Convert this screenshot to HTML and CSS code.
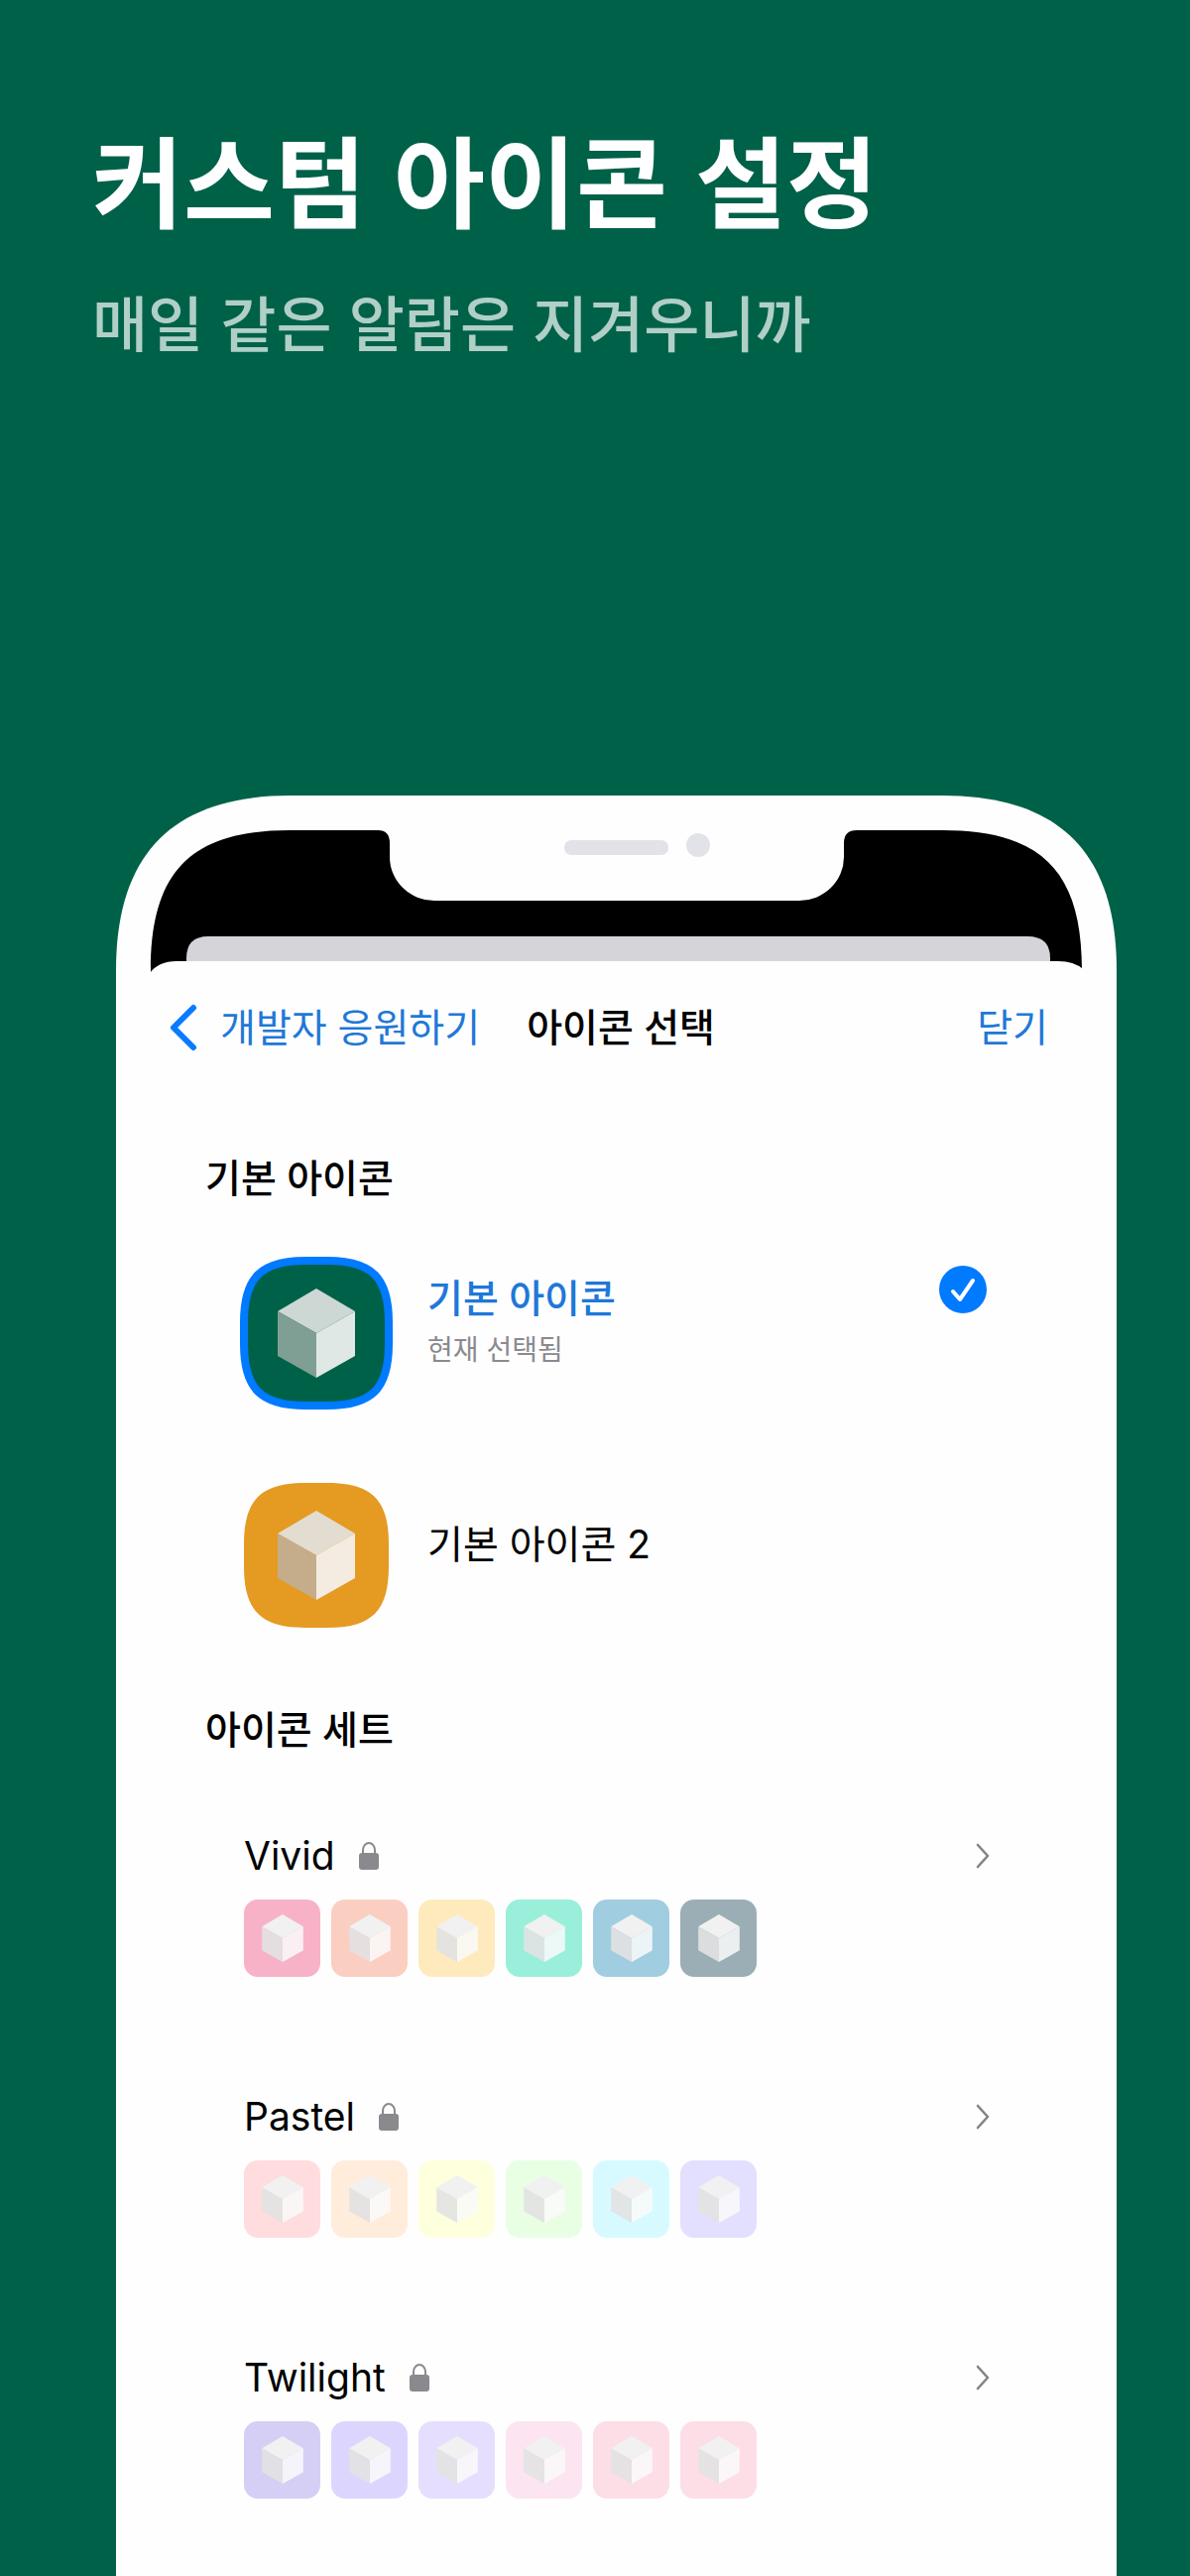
FILE: index.html
```html
<!DOCTYPE html>
<html lang="ko">
<head>
    <meta charset="UTF-8">
    <meta name="viewport" content="width=device-width, initial-scale=1.0">
    <title>커스텀 아이콘 설정</title>
    <link rel="stylesheet" href="styles.css">
</head>
<body>
    <!-- shared shapes -->
    <svg class="symbols" aria-hidden="true">
        <symbol id="cube" viewBox="0 0 78 90">
            <path class="cube-top" d="M39 0 78 23 39 45 0 23z"/>
            <path class="cube-left" d="M0 23 39 45V90L0 68z"/>
            <path class="cube-right" d="M78 23 39 45V90L78 68z"/>
        </symbol>
        <symbol id="squircle" viewBox="0 0 146 146">
            <path d="M0 73V62C0 17 17 0 62 0H84C129 0 146 17 146 62V84C146 129 129 146 84 146H62C17 146 0 129 0 84z"/>
        </symbol>
        <symbol id="lock" viewBox="0 0 20 28">
            <path d="M4 13V8a6 7 0 0 1 12 0v5" fill="none" stroke="currentColor" stroke-width="2"/>
            <rect y="11" width="20" height="17" rx="3" fill="currentColor"/>
        </symbol>
        <symbol id="chevron" viewBox="0 0 14 26">
            <path d="M2 2 12 13 2 24" fill="none" stroke="currentColor" stroke-width="2.6" stroke-linecap="round" stroke-linejoin="round"/>
        </symbol>
    </svg>

    <header class="intro">
        <h1>커스텀 아이콘 설정</h1>
        <p>매일 같은 알람은 지겨우니까</p>
    </header>

    <main class="phone">
        <svg class="phone-top" viewBox="0 0 1009 180" aria-hidden="true">
            <path fill="#fefefe" d="M0 181V176C0 58 58 0 176 0H833C951 0 1009 58 1009 176V181z"/>
            <path fill="#000" d="M35 180V176C35 76 76 35 176 35H264Q276 35 276 48V62A45 44 0 0 0 321 106H689A45 44 0 0 0 734 62V48Q734 35 747 35H833C933 35 974 76 974 176V180z"/>
            <path fill="#d5d4d9" d="M71 170V164Q71 142 93 142H919Q942 142 942 164V170z"/>
            <path fill="#fefefe" d="M34 181V179Q43 167 61 167H950Q966 167 975 175V181z"/>
            <rect x="452" y="45" width="105" height="15" rx="7" fill="#e2e3e9"/>
            <circle cx="587" cy="50" r="12" fill="#e2e3e9"/>
        </svg>

        <div class="screen">
            <nav class="navbar">
                <a class="back" href="#">
                    <svg width="28" height="48" viewBox="0 0 28 48" aria-hidden="true">
                        <path d="M24 4 4 24 24 44" fill="none" stroke="#0a7aff" stroke-width="6" stroke-linecap="round" stroke-linejoin="round"/>
                    </svg>
                    개발자 응원하기
                </a>
                <h2>아이콘 선택</h2>
                <button type="button" class="close">닫기</button>
            </nav>

            <section>
                <h3>기본 아이콘</h3>
                <div class="icon-list">
                    <button type="button" class="icon-row selected" aria-pressed="true">
                        <span class="app-icon green">
                            <svg class="plate"><use href="#squircle"/></svg>
                            <svg class="cube"><use href="#cube"/></svg>
                        </span>
                        <span class="icon-text">
                            <span class="name">기본 아이콘</span>
                            <span class="state">현재 선택됨</span>
                        </span>
                        <svg class="check" viewBox="0 0 48 48" aria-hidden="true">
                            <circle cx="24" cy="24" r="24" fill="#007aff"/>
                            <path d="M14 26 21 34 34 15" fill="none" stroke="#fff" stroke-width="4" stroke-linecap="round" stroke-linejoin="round"/>
                        </svg>
                    </button>
                    <button type="button" class="icon-row" aria-pressed="false">
                        <span class="app-icon orange">
                            <svg class="plate"><use href="#squircle"/></svg>
                            <svg class="cube"><use href="#cube"/></svg>
                        </span>
                        <span class="icon-text">
                            <span class="name">기본 아이콘 2</span>
                        </span>
                    </button>
                </div>
            </section>

            <section>
                <h3>아이콘 세트</h3>
                <div class="set-list">
                    <a class="icon-set" href="#">
                        <span class="set-head">
                            Vivid
                            <svg class="lock"><use href="#lock"/></svg>
                            <svg class="chevron"><use href="#chevron"/></svg>
                        </span>
                        <span class="tiles">
                            <span class="tile pink"><svg><use href="#cube"/></svg></span>
                            <span class="tile coral"><svg><use href="#cube"/></svg></span>
                            <span class="tile yellow"><svg><use href="#cube"/></svg></span>
                            <span class="tile mint"><svg><use href="#cube"/></svg></span>
                            <span class="tile blue"><svg><use href="#cube"/></svg></span>
                            <span class="tile slate"><svg><use href="#cube"/></svg></span>
                        </span>
                    </a>
                    <a class="icon-set" href="#">
                        <span class="set-head">
                            Pastel
                            <svg class="lock"><use href="#lock"/></svg>
                            <svg class="chevron"><use href="#chevron"/></svg>
                        </span>
                        <span class="tiles">
                            <span class="tile pale-red"><svg><use href="#cube"/></svg></span>
                            <span class="tile pale-orange"><svg><use href="#cube"/></svg></span>
                            <span class="tile pale-yellow"><svg><use href="#cube"/></svg></span>
                            <span class="tile pale-green"><svg><use href="#cube"/></svg></span>
                            <span class="tile pale-cyan"><svg><use href="#cube"/></svg></span>
                            <span class="tile pale-violet"><svg><use href="#cube"/></svg></span>
                        </span>
                    </a>
                    <a class="icon-set" href="#">
                        <span class="set-head">
                            Twilight
                            <svg class="lock"><use href="#lock"/></svg>
                            <svg class="chevron"><use href="#chevron"/></svg>
                        </span>
                        <span class="tiles">
                            <span class="tile dusk"><svg><use href="#cube"/></svg></span>
                            <span class="tile iris"><svg><use href="#cube"/></svg></span>
                            <span class="tile lilac"><svg><use href="#cube"/></svg></span>
                            <span class="tile blush"><svg><use href="#cube"/></svg></span>
                            <span class="tile rose"><svg><use href="#cube"/></svg></span>
                            <span class="tile rose"><svg><use href="#cube"/></svg></span>
                        </span>
                    </a>
                </div>
            </section>
        </div>
    </main>
</body>
</html>
```
FILE: styles.css
```css
* {
    box-sizing: border-box;
}
body {
    font-family: Inter, 'Noto Sans CJK KR', sans-serif;
    background-color: #006149;
    color: #000;
    display: flex;
    flex-direction: column;
    min-height: 100vh;
    margin: 0;
}
h1, h2, h3, p {
    margin: 0;
}
button {
    background: none;
    border: none;
    padding: 0;
    font-family: inherit;
    font-size: inherit;
    line-height: inherit;
    color: inherit;
    text-align: left;
    cursor: pointer;
}
a {
    color: inherit;
    text-decoration: none;
}
svg {
    display: block;
    flex-shrink: 0;
}
.symbols {
    position: absolute;
    width: 0;
    height: 0;
}

/* headline */
.intro {
    font-family: 'Noto Sans CJK KR', sans-serif;
    padding: 107px 93px 0;
}
.intro h1 {
    color: #fff;
    font-size: 100px;
    line-height: 144px;
    font-weight: 700;
}
.intro p {
    color: #b0cfc7;
    font-size: 61px;
    line-height: 88px;
    font-weight: 500;
    margin-top: 29px;
}

/* phone */
.phone {
    flex: 1;
    display: flex;
    flex-direction: column;
    margin: 434px 74px 0 117px;
}
.phone-top {
    width: 100%;
}
.screen {
    flex: 1;
    background-color: #fefefe;
    font-size: 39px;
    line-height: 48px;
    padding: 30px 0 60px;
}
.navbar {
    display: flex;
    align-items: center;
    padding: 0 69px 0 54px;
}
.back {
    color: #1f78d8;
    display: flex;
    align-items: center;
    gap: 23px;
}
.navbar h2 {
    font-size: 39px;
    font-weight: 500;
    margin-left: 47px;
}
.close {
    color: #1f78d8;
    margin-left: auto;
}
h3 {
    font-size: 39px;
    font-weight: 500;
    margin-left: 90px;
}
section:first-of-type {
    margin-top: 104px;
}
section + section {
    margin-top: 72px;
}

/* single icons */
.icon-list {
    display: flex;
    flex-direction: column;
    gap: 64px;
    padding: 52px 131px 0 122px;
}
.icon-row {
    display: flex;
    align-items: center;
    gap: 32px;
}
.app-icon {
    display: grid;
    place-items: center;
    width: 160px;
    height: 160px;
}
.app-icon svg {
    grid-area: 1 / 1;
}
.plate {
    width: 146px;
    height: 146px;
    overflow: visible;
}
#squircle {
    overflow: visible;
}
.selected .plate {
    stroke: #007aff;
    stroke-width: 8px;
}
.app-icon .cube {
    width: 78px;
    height: 90px;
}
.green {
    fill: #006149;
    --top: #cdd7d3;
    --left: #7f9f95;
    --right: #dfe8e5;
}
.orange {
    fill: #e59a22;
    --top: #e2ddd0;
    --left: #c5ad8b;
    --right: #f4ece1;
}
.cube-top {
    fill: var(--top, #f1f1f1);
}
.cube-left {
    fill: var(--left, rgba(226, 226, 226, 0.9));
}
.cube-right {
    fill: var(--right, rgba(250, 250, 250, 0.85));
}
.icon-text {
    display: flex;
    flex-direction: column;
    gap: 8px;
    padding-bottom: 22px;
}
.selected .name {
    color: #1f78d8;
    font-weight: 500;
}
.state {
    color: #8a8a8e;
    font-size: 28px;
    line-height: 40px;
}
.check {
    width: 48px;
    height: 48px;
    align-self: flex-start;
    margin: 12px 0 0 auto;
}

/* icon sets */
.set-list {
    display: flex;
    flex-direction: column;
    gap: 117px;
    padding: 79px 128px 0 129px;
}
.icon-set {
    display: flex;
    flex-direction: column;
    gap: 20px;
}
.set-head {
    display: flex;
    align-items: center;
    gap: 24px;
}
.lock {
    color: #8a8a8e;
    width: 20px;
    height: 28px;
}
.chevron {
    color: #848484;
    width: 14px;
    height: 26px;
    margin-left: auto;
}
.tiles {
    display: flex;
    gap: 11px;
}
.tile {
    display: grid;
    place-items: center;
    width: 77px;
    height: 78px;
    border-radius: 14px;
}
.tile svg {
    width: 42px;
    height: 48px;
}
.pink { background-color: #f8b2c8; }
.coral { background-color: #fbcec2; }
.yellow { background-color: #feeabd; }
.mint { background-color: #9aefdb; }
.blue { background-color: #a0cde0; }
.slate { background-color: #9baeb5; }
.pale-red { background-color: #ffdcde; }
.pale-orange { background-color: #ffecdb; }
.pale-yellow { background-color: #feffdd; }
.pale-green { background-color: #e8ffe4; }
.pale-cyan { background-color: #d6faff; }
.pale-violet { background-color: #e3dffe; }
.dusk { background-color: #d5cff5; }
.iris { background-color: #dcd6ff; }
.lilac { background-color: #e6deff; }
.blush { background-color: #fce4f1; }
.rose { background-color: #fddee6; }
```
